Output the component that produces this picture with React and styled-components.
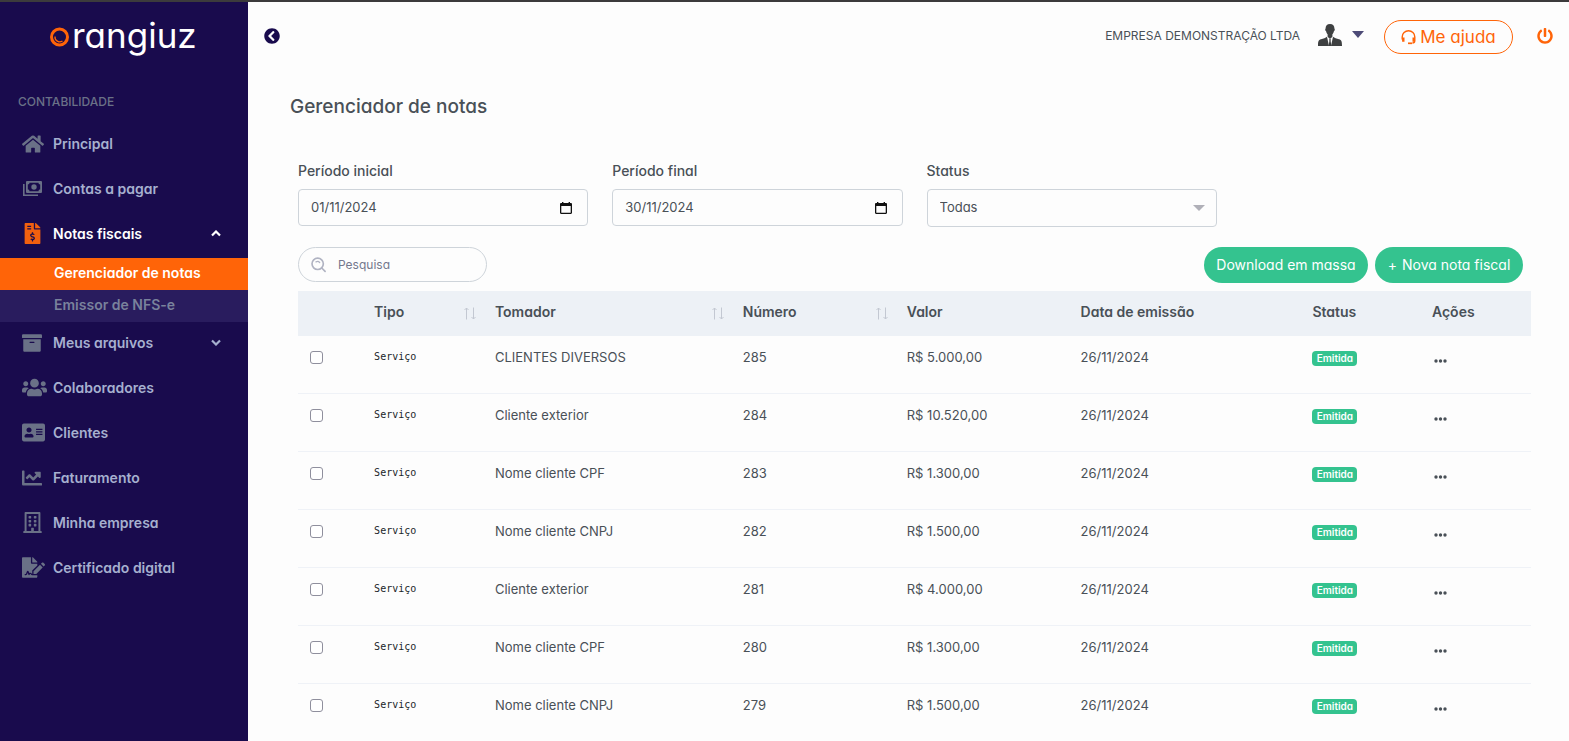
import React, { useState } from 'react';
import styled, { createGlobalStyle, css } from 'styled-components';
import {
  FaHome,
  FaFileInvoiceDollar,
  FaArchive,
  FaUsers,
  FaAddressCard,
  FaChartLine,
  FaRegBuilding,
  FaFileSignature,
  FaPowerOff,
  FaChevronCircleLeft,
} from 'react-icons/fa';

const GlobalStyle = createGlobalStyle`
  *, *::before, *::after {
    box-sizing: border-box;
  }
  body {
    margin: 0;
    background: #fdfdfd;
    color: #495057;
    font-family: Inter, 'Open Sans', sans-serif;
    font-size: 13px;
    line-height: 20px;
    font-feature-settings: 'cv11';
  }
  button, input, select {
    font: inherit;
    font-feature-settings: inherit;
    color: inherit;
  }
`;

const Layout = styled.div`
  display: flex;
  height: 100vh;
  border-top: 2px solid #3c3b3c;
`;

/* menu lateral */
const Sidebar = styled.aside`
  flex: 0 0 248px;
  background: #190b4d;
  color: #a6b0cf;
  overflow: hidden;
`;

const Logo = styled.a`
  display: flex;
  align-items: center;
  gap: 2px;
  height: 65px;
  padding: 0 0 0 50px;
  color: #fff;
  font-size: 35px;
  line-height: 40px;
  text-decoration: none;

  svg {
    margin-top: 4px;
  }
`;

const MenuTitle = styled.h2`
  margin: 0;
  padding: 25px 18px 9px;
  color: #6a7187;
  font-size: 12px;
  font-weight: 500;
  line-height: 20px;
`;

const Menu = styled.ul`
  list-style: none;
  margin: 0;
  padding: 0;
`;

const MenuLink = styled.a`
  display: flex;
  align-items: center;
  height: 45px;
  padding: 0 27px 0 22px;
  color: ${({ $active }) => ($active ? '#fff' : '#a6b0cf')};
  font-size: 14px;
  font-weight: 600;
  text-decoration: none;
`;

const MenuIcon = styled.span`
  display: flex;
  justify-content: ${({ $wide }) => ($wide ? 'flex-start' : 'center')};
  width: 21px;
  margin-right: 10px;
  color: ${({ $active }) => ($active ? '#f2600f' : '#6a7187')};
  font-size: 21px;

  svg {
    flex: none;
  }
`;

const MenuLabel = styled.span`
  flex: 1;
`;

const Submenu = styled.ul`
  list-style: none;
  margin: 2px 0 -2px;
  padding: 0;
`;

const SubmenuLink = styled.a`
  display: block;
  padding: 5px 0 7px 54px;
  background: ${({ $active }) => ($active ? '#ff6408' : '#291c5e')};
  color: ${({ $active }) => ($active ? '#fff' : '#79829c')};
  font-size: 14px;
  font-weight: 600;
  text-decoration: none;
`;

/* topo */
const Main = styled.main`
  flex: 1;
  min-width: 0;
  overflow-y: auto;
  scrollbar-width: none;
`;

const Topbar = styled.header`
  display: flex;
  align-items: center;
  height: 68px;
  padding: 0 16px;
`;

const IconButton = styled.button`
  display: flex;
  padding: 0;
  border: 0;
  background: none;
  color: ${({ $color }) => $color};
  font-size: 16px;
  cursor: pointer;
`;

const Account = styled.button`
  display: flex;
  align-items: center;
  margin-left: auto;
  padding: 0;
  border: 0;
  background: none;
  font-size: 12px;
  cursor: pointer;
`;

const Avatar = styled.svg`
  margin: 0 10px 2px 18px;
`;

const Caret = styled.span`
  border: 6px solid transparent;
  border-top: 7px solid #4d4b77;
  border-bottom: 0;
  margin-bottom: 3px;
`;

const HelpButton = styled.button`
  display: flex;
  align-items: center;
  justify-content: center;
  gap: 4px;
  width: 129px;
  height: 34px;
  margin: 2px 24px 0 20px;
  padding: 0;
  border: 1px solid #ff6408;
  border-radius: 17px;
  background: transparent;
  color: #ff6408;
  font-size: 17px;
  cursor: pointer;
`;

/* conteudo */
const Content = styled.section`
  padding: 25px 38px 0 50px;
`;

const Title = styled.h1`
  margin: 0 0 0 -8px;
  font-size: 19px;
  font-weight: 500;
  line-height: 24px;
`;

const Filters = styled.form`
  display: grid;
  grid-template-columns: repeat(4, 1fr);
  align-items: start;
  gap: 24px;
  margin-top: 42px;
`;

const Field = styled.div`
  display: flex;
  flex-direction: column;
  gap: 8px;
`;

const FieldLabel = styled.label`
  font-size: 14px;
  font-weight: 500;
`;

const controlBox = css`
  border: 1px solid #ced4da;
  border-radius: 4px;
  background: #fdfdfd;
`;

const DateBox = styled.div`
  ${controlBox}
  display: flex;
  align-items: center;
  height: 37px;
  padding: 0 15px 0 12px;
`;

const DateInput = styled.input`
  flex: 1;
  min-width: 0;
  padding: 0 0 2px;
  border: 0;
  outline: 0;
  background: none;
`;

const SelectBox = styled.div`
  position: relative;
`;

const Select = styled.select`
  ${controlBox}
  appearance: none;
  width: 100%;
  height: 38px;
  padding: 0 12px 2px;
`;

const SelectArrow = styled.span`
  position: absolute;
  top: 16px;
  right: 12px;
  border: 6px solid transparent;
  border-top-color: #b0b0b8;
  border-bottom: 0;
  pointer-events: none;
`;

const Toolbar = styled.div`
  display: flex;
  align-items: flex-start;
  justify-content: space-between;
  margin-top: 20px;
  padding-right: 8px;
`;

const SearchBox = styled.label`
  ${controlBox}
  display: flex;
  align-items: center;
  gap: 12px;
  width: 189px;
  height: 35px;
  padding: 0 12px;
  border-radius: 18px;
`;

const SearchInput = styled.input`
  width: 100%;
  padding: 0;
  border: 0;
  outline: 0;
  background: none;
  font-size: 12px;

  &::placeholder {
    color: #74788d;
    opacity: 1;
  }
`;

const Actions = styled.div`
  display: flex;
  gap: 7px;
`;

const GreenButton = styled.button`
  display: flex;
  align-items: center;
  justify-content: center;
  gap: 5px;
  min-width: ${({ $width }) => $width}px;
  height: 36px;
  padding: 0 12px;
  border: 0;
  border-radius: 18px;
  background: #34c38f;
  color: #fff;
  font-size: 14px;
  cursor: pointer;
`;

const Table = styled.table`
  width: 100%;
  margin-top: 8px;
  border-collapse: separate;
  border-spacing: 0;
  table-layout: fixed;
`;

const Col = styled.col`
  width: ${({ $width }) => $width}%;
`;

const HeadCell = styled.th`
  height: 45px;
  padding: 0 6px 3px 12px;
  background: #edf1f6;
  font-size: 14px;
  font-weight: 600;
  text-align: left;
`;

const HeadLabel = styled.div`
  display: flex;
  align-items: center;
  justify-content: space-between;

  svg {
    margin-top: 3px;
  }
`;

const Cell = styled.td`
  height: 58px;
  padding: 11px 12px;
  border-bottom: 1px solid #eff2f7;
  vertical-align: top;
`;

const Checkbox = styled.input`
  appearance: none;
  display: block;
  width: 13px;
  height: 13px;
  margin: 4px 0;
  border: 1px solid #8f8f9d;
  border-radius: 3px;
  background: #fff;

  &:checked {
    background: #190b4d;
  }
`;

const Kind = styled.code`
  display: block;
  color: #212529;
  font-family: 'DejaVu Sans Mono', monospace;
  font-size: 10px;
  line-height: 20px;
`;

const Badge = styled.span`
  display: block;
  width: 45px;
  margin-top: 4px;
  border-radius: 4px;
  background: #34c38f;
  color: #fff;
  font-size: 10px;
  font-weight: 600;
  line-height: 15px;
  text-align: center;
`;

const MoreButton = styled.button`
  display: flex;
  margin: 8px 0 0 2px;
  padding: 4px 0;
  border: 0;
  background: none;
  cursor: pointer;
`;

const BillsIcon = () => (
  <svg width="19" height="15" viewBox="0 0 19 15" fill="none">
    <path d="M.8 3v11.200H15" stroke="currentColor" strokeWidth="1.600" />
    <path
      d="M4 0h14a1 1 0 0 1 1 1v10a1 1 0 0 1-1 1H4a1 1 0 0 1-1-1V1a1 1 0 0 1 1-1zM6.500 1.800c0 1-.7 1.700-1.700 1.700v5c1 0 1.700.7 1.700 1.700h9c0-1 .7-1.700 1.700-1.700v-5c-1 0-1.700-.7-1.700-1.700z"
      fill="currentColor"
      fillRule="evenodd"
    />
    <circle cx="11" cy="6" r="2.700" fill="currentColor" />
  </svg>
);

const HeadsetIcon = () => (
  <svg width="15" height="15" viewBox="0 0 15 15" fill="none" stroke="currentColor">
    <path d="M1.200 9.500V7a6.300 6.200 0 0 1 12.600 0v3.500c0 1.500-.9 2.500-2.400 2.500" strokeWidth="1.400" />
    <path d="M2.300 7.500v4.300M12.700 7.500v4.300" strokeWidth="2.400" />
    <path d="M7 13.300h4" strokeWidth="1.700" />
  </svg>
);

const SearchIcon = () => (
  <svg width="18" height="18" viewBox="0 0 18 18" fill="none" stroke="#b0b3c2" strokeLinecap="round">
    <circle cx="8" cy="7.600" r="6.800" strokeWidth="2" />
    <path d="M12.900 12.600l4 4" strokeWidth="2" />
    <path d="M6 5.300c1.600-.9 3.400-.6 4.400.8" strokeWidth="1.600" />
  </svg>
);

const CalendarIcon = () => (
  <svg width="12" height="12" viewBox="0 0 12 12">
    <path
      d="M2 0h1.400v1h5.200V0H10v1h.8c.7 0 1.200.5 1.200 1.200v8.600c0 .7-.5 1.200-1.200 1.200H1.200C.5 12 0 11.500 0 10.800V2.200C0 1.500.5 1 1.200 1H2zM1.300 4v6.700h9.400V4z"
      fill="#111"
      fillRule="evenodd"
    />
  </svg>
);

const SortIcon = () => (
  <svg width="13" height="13" viewBox="0 0 13 13" fill="none" stroke="#c3c8d2">
    <path d="M2.500 12.500V1M.5 3l2-2 2 2M9.500 .5V12M7.500 10l2 2 2-2" />
  </svg>
);

const ChevronIcon = ({ up }) => (
  <svg width="10" height="7" viewBox="0 0 10 7" fill="none" stroke="currentColor" strokeWidth="2.200">
    <path d={up ? 'M1 5.500l4-4 4 4' : 'M1 1.500l4 4 4-4'} />
  </svg>
);

const MENU = [
  { label: 'Principal', icon: <FaHome size={22} /> },
  { label: 'Contas a pagar', icon: <BillsIcon /> },
  {
    label: 'Notas fiscais',
    icon: <FaFileInvoiceDollar />,
    active: true,
    children: ['Gerenciador de notas', 'Emissor de NFS-e'],
  },
  { label: 'Meus arquivos', icon: <FaArchive size={20} />, collapsed: true, wide: true },
  { label: 'Colaboradores', icon: <FaUsers size={25} />, wide: true },
  { label: 'Clientes', icon: <FaAddressCard size={23} />, wide: true },
  { label: 'Faturamento', icon: <FaChartLine size={20} />, wide: true },
  { label: 'Minha empresa', icon: <FaRegBuilding /> },
  { label: 'Certificado digital', icon: <FaFileSignature size={23} />, wide: true },
];

const COLUMNS = [
  { label: '', width: 5.2 },
  { label: 'Tipo', width: 9.8, sortable: true },
  { label: 'Tomador', width: 20.1, sortable: true },
  { label: 'Número', width: 13.3, sortable: true },
  { label: 'Valor', width: 14.1 },
  { label: 'Data de emissão', width: 18.8 },
  { label: 'Status', width: 9.7 },
  { label: 'Ações', width: 9 },
];

const NOTAS = [
  { numero: 285, tomador: 'CLIENTES DIVERSOS', valor: 'R$ 5.000,00' },
  { numero: 284, tomador: 'Cliente exterior', valor: 'R$ 10.520,00' },
  { numero: 283, tomador: 'Nome cliente CPF', valor: 'R$ 1.300,00' },
  { numero: 282, tomador: 'Nome cliente CNPJ', valor: 'R$ 1.500,00' },
  { numero: 281, tomador: 'Cliente exterior', valor: 'R$ 4.000,00' },
  { numero: 280, tomador: 'Nome cliente CPF', valor: 'R$ 1.300,00' },
  { numero: 279, tomador: 'Nome cliente CNPJ', valor: 'R$ 1.500,00' },
];

const DateField = ({ id, label, value, onChange }) => (
  <Field>
    <FieldLabel htmlFor={id}>{label}</FieldLabel>
    <DateBox>
      <DateInput id={id} value={value} onChange={(e) => onChange(e.target.value)} />
      <IconButton type="button" $color="#111" aria-label="Abrir calendário">
        <CalendarIcon />
      </IconButton>
    </DateBox>
  </Field>
);

const App = () => {
  const [startDate, setStartDate] = useState('01/11/2024');
  const [endDate, setEndDate] = useState('30/11/2024');
  const [search, setSearch] = useState('');

  return (
    <>
      <GlobalStyle />
      <Layout>
        <Sidebar>
          <Logo href="#">
            <svg width="20" height="20" viewBox="0 0 20 20" fill="none" stroke="#ff6408">
              <circle cx="9.500" cy="10" r="8" strokeWidth="3" />
              <path d="M5 9.500a4.800 4.800 0 0 0 7.500 4.500" strokeWidth="1.300" />
            </svg>
            <span>rangiuz</span>
          </Logo>
          <MenuTitle>CONTABILIDADE</MenuTitle>
          <Menu>
            {MENU.map((item) => (
              <li key={item.label}>
                <MenuLink href="#" $active={item.active}>
                  <MenuIcon $active={item.active} $wide={item.wide}>
                    {item.icon}
                  </MenuIcon>
                  <MenuLabel>{item.label}</MenuLabel>
                  {(item.children || item.collapsed) && (
                    <ChevronIcon up={!item.collapsed} />
                  )}
                </MenuLink>
                {item.children && (
                  <Submenu>
                    {item.children.map((child, i) => (
                      <li key={child}>
                        <SubmenuLink href="#" $active={i === 0}>
                          {child}
                        </SubmenuLink>
                      </li>
                    ))}
                  </Submenu>
                )}
              </li>
            ))}
          </Menu>
        </Sidebar>

        <Main>
          <Topbar>
            <IconButton type="button" $color="#190b4d" aria-label="Recolher menu">
              <FaChevronCircleLeft />
            </IconButton>
            <Account type="button">
              EMPRESA DEMONSTRAÇÃO LTDA
              <Avatar width="24" height="22" viewBox="0 0 24 22" fill="#3e4041">
                <path d="M12 0c3 0 4.500 1.800 4.400 4.500.7.200.5 2.300-.5 2.700-.3 1.500-.8 2.400-1.500 3.100v2.500L12 15l-2.400-2.200v-2.500C8.900 9.600 8.400 8.700 8.100 7.200c-1-.4-1.200-2.500-.5-2.700C7.500 1.800 9 0 12 0z" />
                <path d="M9 12.800L11 22H0c0-4.500.4-5.800 3-6.700 2.500-.9 4.500-1.200 6-2.500zM15 12.800L13 22h11c0-4.500-.4-5.800-3-6.700-2.500-.9-4.500-1.200-6-2.500z" />
                <path d="M11 15.200h2l-.4 1.600.8 5.200h-2.800l.8-5.200z" />
              </Avatar>
              <Caret />
            </Account>
            <HelpButton type="button">
              <HeadsetIcon />
              Me ajuda
            </HelpButton>
            <IconButton type="button" $color="#ff6408" aria-label="Sair">
              <FaPowerOff />
            </IconButton>
          </Topbar>

          <Content>
            <Title>Gerenciador de notas</Title>

            <Filters>
              <DateField
                id="periodo-inicial"
                label="Período inicial"
                value={startDate}
                onChange={setStartDate}
              />
              <DateField
                id="periodo-final"
                label="Período final"
                value={endDate}
                onChange={setEndDate}
              />
              <Field>
                <FieldLabel htmlFor="status">Status</FieldLabel>
                <SelectBox>
                  <Select id="status" defaultValue="todas">
                    <option value="todas">Todas</option>
                    <option value="emitida">Emitida</option>
                  </Select>
                  <SelectArrow />
                </SelectBox>
              </Field>
            </Filters>

            <Toolbar>
              <SearchBox>
                <SearchIcon />
                <SearchInput
                  placeholder="Pesquisa"
                  aria-label="Pesquisa"
                  value={search}
                  onChange={(e) => setSearch(e.target.value)}
                />
              </SearchBox>
              <Actions>
                <GreenButton type="button" $width={164}>
                  Download em massa
                </GreenButton>
                <GreenButton type="button" $width={148}>
                  <span>+</span>
                  Nova nota fiscal
                </GreenButton>
              </Actions>
            </Toolbar>

            <Table>
              <colgroup>
                {COLUMNS.map((col) => (
                  <Col key={col.label} $width={col.width} />
                ))}
              </colgroup>
              <thead>
                <tr>
                  {COLUMNS.map((col) => (
                    <HeadCell key={col.label} scope="col">
                      <HeadLabel>
                        {col.label}
                        {col.sortable && <SortIcon />}
                      </HeadLabel>
                    </HeadCell>
                  ))}
                </tr>
              </thead>
              <tbody>
                {NOTAS.map((nota) => (
                  <tr key={nota.numero}>
                    <Cell>
                      <Checkbox type="checkbox" aria-label={`Selecionar nota ${nota.numero}`} />
                    </Cell>
                    <Cell>
                      <Kind>Serviço</Kind>
                    </Cell>
                    <Cell>{nota.tomador}</Cell>
                    <Cell>{nota.numero}</Cell>
                    <Cell>{nota.valor}</Cell>
                    <Cell>26/11/2024</Cell>
                    <Cell>
                      <Badge>Emitida</Badge>
                    </Cell>
                    <Cell>
                      <MoreButton type="button" aria-label="Ações da nota">
                        <svg width="13" height="4" viewBox="0 0 13 4" fill="#495057">
                          <circle cx="2" cy="2" r="1.700" />
                          <circle cx="6.500" cy="2" r="1.700" />
                          <circle cx="11" cy="2" r="1.700" />
                        </svg>
                      </MoreButton>
                    </Cell>
                  </tr>
                ))}
              </tbody>
            </Table>
          </Content>
        </Main>
      </Layout>
    </>
  );
};

export default App;
